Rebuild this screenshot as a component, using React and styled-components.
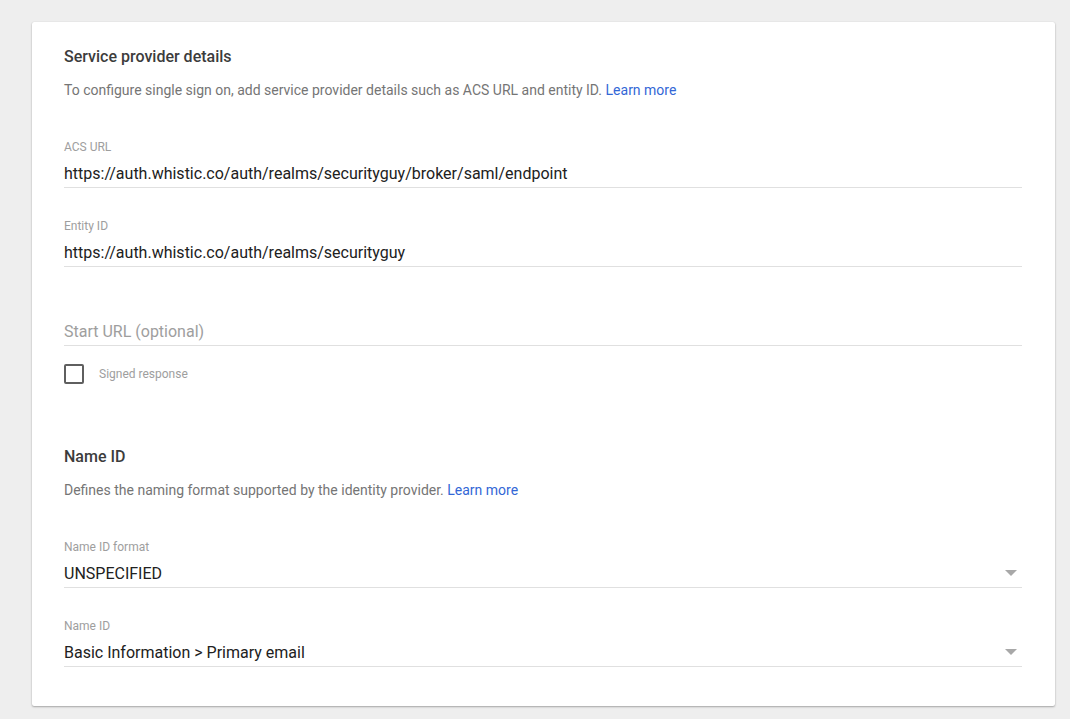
import React from 'react';
import styled, { createGlobalStyle } from 'styled-components';

const GlobalStyle = createGlobalStyle`
	html, body {
		margin: 0;
		padding: 0;
		background: #eeeeee;
		font-family: Roboto, "Liberation Sans", Arial, sans-serif;
	}
`;

const Page = styled.div`
	padding: 22px 15px 14px 32px;
	min-height: 719px;
	box-sizing: border-box;
`;
const Card = styled.div`
	background: #ffffff;
	border-radius: 2px;
	box-shadow: 0 1px 2px rgba(0, 0, 0, 0.3), 0 0 1px rgba(0, 0, 0, 0.12);
	padding: 25px 33px 39px 32px;
`;
const Title = styled.h2`
	margin: 0 0 14px;
	font-size: 16px;
	line-height: 20px;
	font-weight: 500;
	color: #3c3c3c;
`;
const Description = styled.p`
	margin: 0 0 41px;
	font-size: 14px;
	line-height: 18px;
	color: #757575;
`;
const LearnMore = styled.a`
	color: #3367d6;
	text-decoration: none;
`;
const Field = styled.div`
	position: relative;
	border-bottom: 1px solid #e0e0e0;
	padding-bottom: 3px;
	margin-bottom: ${(p) => (p.$last ? '0' : '31px')};
`;
const Label = styled.div`
	font-size: 12px;
	line-height: 14px;
	color: #9e9e9e;
	margin-bottom: 10px;
	height: 14px;
`;
const Value = styled.div`
	font-size: 16px;
	line-height: 20px;
	color: ${(p) => (p.$placeholder ? '#9e9e9e' : '#212121')};
`;
const Arrow = styled.span`
	position: absolute;
	right: 5px;
	bottom: 11px;
	width: 0;
	height: 0;
	border-left: 6px solid transparent;
	border-right: 6px solid transparent;
	border-top: 6px solid #a8a8a8;
`;
const CheckRow = styled.label`
	display: flex;
	align-items: center;
	margin-top: 18px;
	margin-bottom: 63px;
`;
const Box = styled.span`
	width: 16px;
	height: 16px;
	border: 2px solid #5f5f5f;
	border-radius: 2px;
	margin-right: 15px;
`;
const CheckText = styled.span`
	font-size: 12px;
	color: #9e9e9e;
`;

const TextField = ({ label, value, placeholder, select, last }) => (
	<Field $last={last}>
		<Label>{label}</Label>
		<Value $placeholder={!!placeholder}>{value || placeholder}</Value>
		{select && <Arrow />}
	</Field>
);

const App = () => (
	<Page>
		<GlobalStyle />
		<Card>
			<Title>Service provider details</Title>
			<Description>
				To configure single sign on, add service provider details such as ACS URL and entity ID.{' '}
				<LearnMore href="#">Learn more</LearnMore>
			</Description>
			<TextField
				label="ACS URL"
				value="https://auth.whistic.co/auth/realms/securityguy/broker/saml/endpoint"
			/>
			<TextField label="Entity ID" value="https://auth.whistic.co/auth/realms/securityguy" />
			<TextField placeholder="Start URL (optional)" last />
			<CheckRow>
				<Box />
				<CheckText>Signed response</CheckText>
			</CheckRow>

			<Title>Name ID</Title>
			<Description>
				Defines the naming format supported by the identity provider.{' '}
				<LearnMore href="#">Learn more</LearnMore>
			</Description>
			<TextField label="Name ID format" value="UNSPECIFIED" select />
			<TextField label="Name ID" value="Basic Information > Primary email" select last />
		</Card>
	</Page>
);

export default App;
